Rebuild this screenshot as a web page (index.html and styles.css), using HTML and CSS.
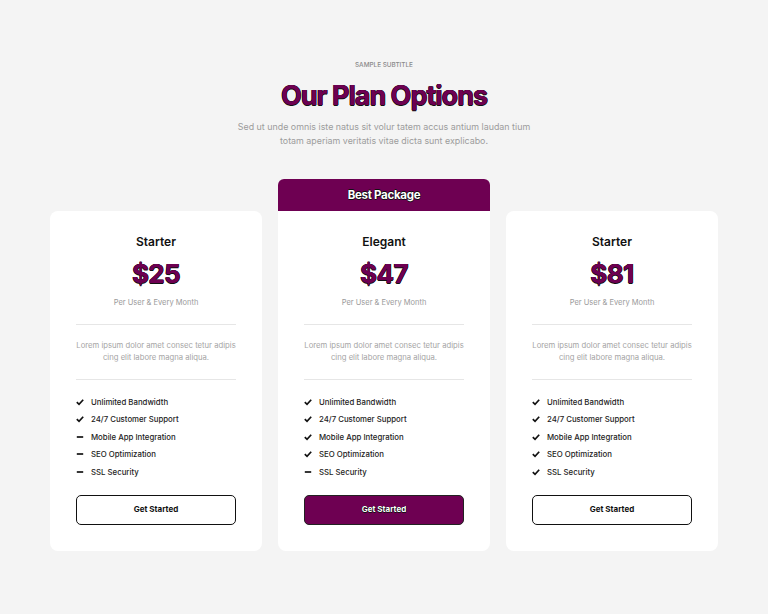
FILE: index.html
```html
<!DOCTYPE html>
<html lang="en">
<head>
<meta charset="utf-8">
<title>Our Plan Options</title>
<link rel="stylesheet" href="styles.css">
</head>
<body>
<section class="pricing">
  <header class="intro">
    <p class="subtitle">SAMPLE SUBTITLE</p>
    <h1 class="title">Our Plan Options</h1>
    <p class="lead">Sed ut unde omnis iste natus sit volur tatem accus antium laudan tium<br>totam aperiam veritatis vitae dicta sunt explicabo.</p>
  </header>
  <div class="plans">
    <article class="plan">
      <h2 class="plan-name">Starter</h2>
      <div class="price">$25</div>
      <p class="per">Per User &amp; Every Month</p>
      <p class="desc">Lorem ipsum dolor amet consec tetur adipis<br>cing elit labore magna aliqua.</p>
      <ul class="features">
        <li><svg class="ico" viewBox="0 0 10 10"><path class="chk" d="M1 5.2 L3.8 8 L9 2.2"/></svg>Unlimited Bandwidth</li>
        <li><svg class="ico" viewBox="0 0 10 10"><path class="chk" d="M1 5.2 L3.8 8 L9 2.2"/></svg>24/7 Customer Support</li>
        <li><svg class="ico" viewBox="0 0 10 10"><path class="dsh" d="M1 5 H9"/></svg>Mobile App Integration</li>
        <li><svg class="ico" viewBox="0 0 10 10"><path class="dsh" d="M1 5 H9"/></svg>SEO Optimization</li>
        <li><svg class="ico" viewBox="0 0 10 10"><path class="dsh" d="M1 5 H9"/></svg>SSL Security</li>
      </ul>
      <a class="btn" href="#">Get Started</a>
    </article>
    <article class="plan featured">
      <div class="badge">Best Package</div>
      <h2 class="plan-name">Elegant</h2>
      <div class="price">$47</div>
      <p class="per">Per User &amp; Every Month</p>
      <p class="desc">Lorem ipsum dolor amet consec tetur adipis<br>cing elit labore magna aliqua.</p>
      <ul class="features">
        <li><svg class="ico" viewBox="0 0 10 10"><path class="chk" d="M1 5.2 L3.8 8 L9 2.2"/></svg>Unlimited Bandwidth</li>
        <li><svg class="ico" viewBox="0 0 10 10"><path class="chk" d="M1 5.2 L3.8 8 L9 2.2"/></svg>24/7 Customer Support</li>
        <li><svg class="ico" viewBox="0 0 10 10"><path class="chk" d="M1 5.2 L3.8 8 L9 2.2"/></svg>Mobile App Integration</li>
        <li><svg class="ico" viewBox="0 0 10 10"><path class="chk" d="M1 5.2 L3.8 8 L9 2.2"/></svg>SEO Optimization</li>
        <li><svg class="ico" viewBox="0 0 10 10"><path class="dsh" d="M1 5 H9"/></svg>SSL Security</li>
      </ul>
      <a class="btn btn-primary" href="#">Get Started</a>
    </article>
    <article class="plan">
      <h2 class="plan-name">Starter</h2>
      <div class="price">$81</div>
      <p class="per">Per User &amp; Every Month</p>
      <p class="desc">Lorem ipsum dolor amet consec tetur adipis<br>cing elit labore magna aliqua.</p>
      <ul class="features">
        <li><svg class="ico" viewBox="0 0 10 10"><path class="chk" d="M1 5.2 L3.8 8 L9 2.2"/></svg>Unlimited Bandwidth</li>
        <li><svg class="ico" viewBox="0 0 10 10"><path class="chk" d="M1 5.2 L3.8 8 L9 2.2"/></svg>24/7 Customer Support</li>
        <li><svg class="ico" viewBox="0 0 10 10"><path class="chk" d="M1 5.2 L3.8 8 L9 2.2"/></svg>Mobile App Integration</li>
        <li><svg class="ico" viewBox="0 0 10 10"><path class="chk" d="M1 5.2 L3.8 8 L9 2.2"/></svg>SEO Optimization</li>
        <li><svg class="ico" viewBox="0 0 10 10"><path class="chk" d="M1 5.2 L3.8 8 L9 2.2"/></svg>SSL Security</li>
      </ul>
      <a class="btn" href="#">Get Started</a>
    </article>
  </div>
</section>
</body>
</html>
```
FILE: styles.css
```css
* { box-sizing: border-box; }
html, body { margin: 0; padding: 0; }
body {
  background: #f4f4f4;
  font-family: Inter, "Noto Sans", "Liberation Sans", sans-serif;
  color: #1a1a1a;
  width: 768px;
  height: 614px;
  overflow: hidden;
}
.pricing {
  padding: 61px 50px 0;
}
.intro { text-align: center; }
.subtitle {
  margin: 0;
  font-size: 6.4px;
  font-weight: 500;
  color: #8a8a8a;
  line-height: 9px;
}
.title {
  margin: 8px 0 0;
  font-size: 27px;
  line-height: 36px;
  font-weight: 700;
  letter-spacing: -1px;
  color: #6e0052;
  text-shadow: -0.5px 0 0 #111, 0.5px 0 0 #111, 0 -0.5px 0 #111, 0 0.5px 0 #111;
}
.lead {
  margin: 6px 0 0;
  font-size: 8.9px;
  line-height: 14px;
  color: #9c9c9c;
}
.plans {
  margin-top: 31px;
  display: grid;
  grid-template-columns: repeat(3, 212px);
  gap: 16px;
  align-items: end;
}
.plan {
  background: #fff;
  border-radius: 8px;
  padding: 23px 26px 26px;
  text-align: center;
  display: flex;
  flex-direction: column;
  height: 340px;
}
.plan.featured {
  height: 372px;
  padding-top: 0;
  border-radius: 6px 6px 8px 8px;
}
.badge {
  margin: 0 -26px 23px;
  height: 32px;
  background: #6e0052;
  border-radius: 6px 6px 0 0;
  color: #fff;
  font-size: 11.5px;
  font-weight: 700;
  line-height: 32px;
  letter-spacing: -0.3px;
  text-shadow: -0.6px 0 0 #111, 0.6px 0 0 #111, 0 -0.6px 0 #111, 0 0.6px 0 #111;
}
.plan-name {
  margin: 0;
  font-size: 12px;
  line-height: 16px;
  font-weight: 600;
  color: #111;
}
.price {
  margin-top: 8px;
  font-size: 26px;
  line-height: 32px;
  font-weight: 700;
  letter-spacing: -0.6px;
  color: #6e0052;
  text-shadow: -0.5px 0 0 #111, 0.5px 0 0 #111, 0 -0.5px 0 #111, 0 0.5px 0 #111;
}
.per {
  margin: 7px 0 0;
  font-size: 7.5px;
  line-height: 12px;
  color: #9a9a9a;
  padding-bottom: 15px;
  border-bottom: 1px solid #e6e6e6;
}
.desc {
  margin: 0;
  padding: 15px 0 15px;
  font-size: 7.7px;
  line-height: 12px;
  white-space: nowrap;
  color: #a5a5a5;
  border-bottom: 1px solid #e6e6e6;
}
.features {
  list-style: none;
  margin: 13px 0 0;
  padding: 0;
  text-align: left;
}
.features li {
  display: flex;
  align-items: center;
  height: 17.5px;
  font-size: 7.8px;
  color: #222;
  font-weight: 500;
}
.ico {
  width: 8px;
  height: 8px;
  margin-right: 7px;
  flex: none;
}
.chk, .dsh {
  fill: none;
  stroke: #111;
  stroke-width: 2.1;
}
.btn {
  margin-top: auto;
  display: block;
  height: 30px;
  line-height: 27px;
  border: 1.5px solid #111;
  border-radius: 5px;
  text-decoration: none;
  color: #111;
  font-size: 8px;
  font-weight: 700;
}
.btn-primary {
  background: #6e0052;
  color: #fff;
  border-color: #222;
  text-shadow: -0.5px 0 0 #111, 0.5px 0 0 #111, 0 -0.5px 0 #111, 0 0.5px 0 #111;
}
```
